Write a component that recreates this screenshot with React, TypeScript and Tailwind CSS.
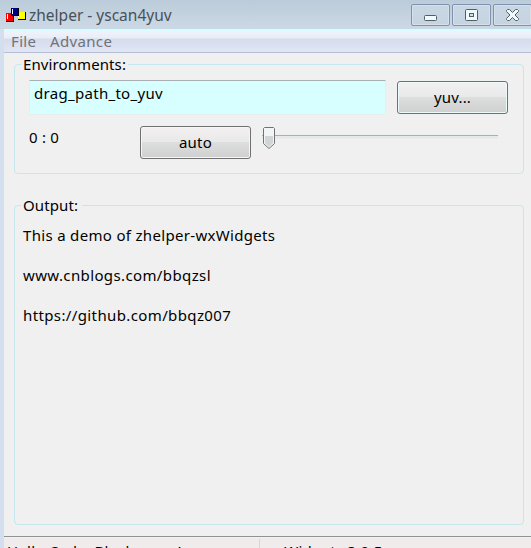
import type { ReactNode } from 'react';

function AppIcon() {
  return (
    <svg width="20" height="15" viewBox="0 0 20 15" shapeRendering="crispEdges">
      <rect x="0" y="5" width="8" height="9" fill="#000" />
      <rect x="0" y="5" width="7" height="8" fill="#f00" />
      <rect x="1" y="6" width="1" height="5" fill="#fff" />
      <rect x="12" y="4" width="8" height="8" fill="#000" />
      <rect x="12" y="4" width="7" height="7" fill="#ff0" />
      <rect x="12" y="5" width="1" height="5" fill="#fff" />
      <rect x="5" y="0" width="8" height="8" fill="#000" />
      <rect x="6" y="0" width="6" height="7" fill="#000080" />
      <rect x="6" y="1" width="1" height="5" fill="#fff" />
    </svg>
  );
}

function CaptionButton({ children }: { children: ReactNode }) {
  return (
    <button className="flex h-[22px] w-[39px] shrink-0 items-center justify-center rounded-[2px] border border-[#8093ae] bg-linear-to-b from-[#c9d6e3] to-[#c6d3e1] shadow-[inset_0_0_0_1px_#d5e0ea]">
      {children}
    </button>
  );
}

function PushButton({ children }: { children: ReactNode }) {
  return (
    <button className="h-[33px] w-[111px] shrink-0 rounded-[3px] border border-[#707070] bg-[linear-gradient(#f2f0f0_0%,#eae9e9_48%,#dcdfdd_50%,#cfcfcf_100%)] tracking-[0.2px] shadow-[inset_0_0_0_1px_#eefafa]">
      {children}
    </button>
  );
}

function Group({ title, titleWidth, className, children }: { title: string; titleWidth: string; className: string; children: ReactNode }) {
  return (
    <fieldset className={'ml-[10px] w-[510px] shrink-0 rounded-[4px] border border-[#c4e8ee] ' + className}>
      <legend className={'ml-[6px] h-[17px] pl-[2px] leading-[17px] tracking-[0.1px] ' + titleWidth}>{title}</legend>
      {children}
    </fieldset>
  );
}

export default function App() {
  return (
    <div className="h-[548px] w-[531px] overflow-hidden bg-[#d3dfee] font-['Noto_Sans','Open_Sans',sans-serif] text-[15px] whitespace-nowrap text-black">
      <header className="flex h-[29px] bg-linear-to-b from-[#bccbd9] to-[#ccd9e5]">
        <div className="pt-[8px] pl-[6px]">
          <AppIcon />
        </div>
        <h1 className="ml-[3px] h-[29px] w-[382px] shrink-0 text-[15.5px] leading-[31px] text-[#46515a]">zhelper - yscan4yuv</h1>
        <div className="flex gap-[2px] pt-[4px]">
          <CaptionButton>
            <svg width="13" height="6" className="mt-[6px]">
              <rect x=".5" y=".5" width="12" height="5" rx="1" fill="#effcff" stroke="#555c65" />
            </svg>
          </CaptionButton>
          <CaptionButton>
            <svg width="13" height="12">
              <rect x=".5" y=".5" width="12" height="11" rx="1" fill="#effafc" stroke="#555c65" />
              <rect x="4.5" y="4.5" width="4" height="3" fill="#d5e0ea" stroke="#555c65" />
            </svg>
          </CaptionButton>
          <CaptionButton>
            <svg width="13" height="12">
              <path d="M1.5.5h2L6.5 3.5l3-3h2l1 1v1L9 6l3.5 3.5v1l-1 1h-2l-3-3-3 3h-2l-1-1v-1L4 6 .5 2.5v-1z" fill="#effafc" stroke="#555c65" />
            </svg>
          </CaptionButton>
        </div>
      </header>

      <div className="ml-[4px] flex h-[519px] flex-col bg-[#f0f0f0]">
        <nav className="flex h-[24px] shrink-0 gap-[13px] border-t-2 border-b border-t-[#d8fcff] border-b-[#b3bdd3] bg-[linear-gradient(#f0f3fa_0px,#e9edf6_7px,#d6dced_8px,#e1e6f4_21px)] pl-[7px] leading-[21px] tracking-[0.35px] text-[#707379]">
          <span className="w-[26px]">File</span>
          <span>Advance</span>
        </nav>

        <Group title="Environments:" titleWidth="w-[107px]" className="mt-[3px] h-[118px]">
          <div className="flex pt-[7px] pl-[14px]">
            <div className="h-[35px] w-[357px] border border-[#e8eeee] border-t-[#a9b0b3] bg-[#d8ffff] pl-[4px] leading-[24px] tracking-[0.3px]">drag_path_to_yuv</div>
            <div className="ml-[11px] pt-px">
              <PushButton>yuv...</PushButton>
            </div>
          </div>
          <div className="mt-[11px] flex pl-[14px]">
            <span className="w-[111px] leading-[22px] tracking-[0.2px]">0 : 0</span>
            <PushButton>auto</PushButton>
            <svg width="238" height="25" className="ml-[11px]">
              <rect x="0" y="9" width="236" height="1" fill="#a9b0b2" />
              <rect x="0" y="10" width="236" height="3" fill="#e7eaea" />
              <rect x="0" y="13" width="237" height="1" fill="#dcfcfc" />
              <path d="M1.5 2.5l1-1h9l1 1v15l-5.5 5-5.5-5z" fill="#f1f5f5" stroke="#6f7376" />
              <path d="M3 10h8v7l-4 4-4-4z" fill="#d2d5d5" />
            </svg>
          </div>
        </Group>

        <Group title="Output:" titleWidth="w-[61px]" className="mt-[23px] h-[328px]">
          <div className="pt-[1px] pl-[8px] leading-[40px] tracking-[0.32px]">
            <p className="h-[40px]">This a demo of zhelper-wxWidgets</p>
            <p className="h-[40px] tracking-[0.38px]">www.cnblogs.com/bbqzsl</p>
            <p className="h-[40px] tracking-[0.38px]">https://github.com/bbqz007</p>
          </div>
        </Group>

        <footer className="mt-[11px] flex h-[30px] shrink-0 border-t border-[#8f9292] bg-[#f0eceb] leading-[25px] tracking-[0.25px] shadow-[inset_0_1px_0_#dcfcfc]">
          <span className="mt-[2px] w-[256px] border-r border-[#d5d5d5] pl-[3px]">Hello Code::Blocks user!</span>
          <span className="mt-[2px] pl-[4px]">wxWidgets 3.0.5</span>
        </footer>
      </div>
    </div>
  );
}
